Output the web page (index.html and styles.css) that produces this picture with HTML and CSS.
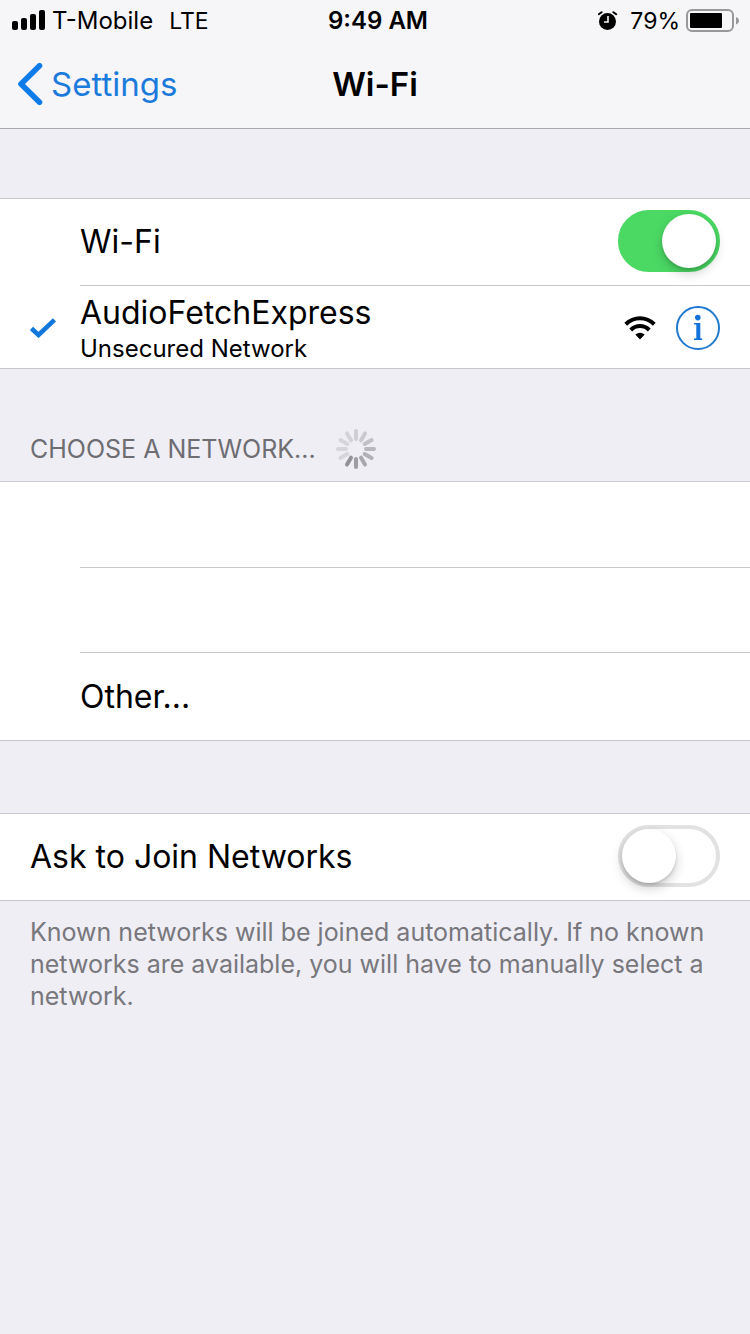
FILE: index.html
```html
<!DOCTYPE html>
<html lang="en">
<head>
<meta charset="utf-8">
<meta name="viewport" content="width=device-width, initial-scale=1">
<title>Wi-Fi</title>
<link rel="stylesheet" href="styles.css">
</head>
<body>
<header class="top">
  <div class="status">
    <div class="status-left">
      <svg width="34" height="22" viewBox="0 0 34 22" aria-hidden="true">
        <rect x="0" y="11" width="6" height="9" rx="2"/>
        <rect x="9" y="8" width="6" height="12" rx="2"/>
        <rect x="18" y="4" width="6" height="16" rx="2"/>
        <rect x="27" y="0" width="6" height="20" rx="2"/>
      </svg>
      <span>T-Mobile</span>
      <span class="bearer">LTE</span>
    </div>
    <div class="time">9:49 AM</div>
    <div class="status-right">
      <svg width="20" height="20" viewBox="0 0 20 20" aria-hidden="true">
        <circle cx="9.500" cy="10.500" r="8.500"/>
        <path d="M.8 3.200 3.600 1.200M18.200 3.200 15.400 1.200" stroke="#000" stroke-width="2" stroke-linecap="round"/>
        <path d="M10 5v6H6" fill="none" stroke="#f6f6f8" stroke-width="1.600"/>
      </svg>
      <span class="percent">79%</span>
      <svg width="54" height="24" viewBox="0 0 54 24" aria-hidden="true">
        <rect x="1" y="1" width="46" height="21" rx="5" fill="none" stroke="#98989b" stroke-width="2"/>
        <rect x="4" y="4" width="32" height="15" rx="1"/>
        <path d="M50 8c4 1.500 4 6 0 7.500z" fill="#98989b"/>
      </svg>
    </div>
  </div>
  <nav class="nav">
    <a class="back" href="#">
      <svg width="26" height="42" viewBox="0 0 26 42" aria-hidden="true">
        <path d="M22.500 2.800 4 21l18.500 18.200" fill="none" stroke="#0d7be8" stroke-width="5.600" stroke-linecap="round" stroke-linejoin="round"/>
      </svg>
      <span>Settings</span>
    </a>
    <h1 class="title">Wi-Fi</h1>
  </nav>
</header>
<main>
  <section class="group first">
    <div class="row indented">
      <label class="label" for="wifi">Wi-Fi</label>
      <input class="switch" id="wifi" type="checkbox" role="switch" checked>
    </div>
    <div class="row network">
      <svg class="check" width="26" height="20" viewBox="0 0 26 20" aria-hidden="true">
        <path d="M1.500 10.500 8.500 17 24.500 1.800" fill="none" stroke="#1277dc" stroke-width="4.600"/>
      </svg>
      <div class="names">
        <span class="ssid">AudioFetchExpress</span>
        <span class="detail">Unsecured Network</span>
      </div>
      <svg width="32" height="24" viewBox="0 0 32 24" aria-hidden="true">
        <path d="M1.700 8.200C10 .2 22 .2 30.300 8.200" fill="none" stroke="#000" stroke-width="4"/>
        <path d="M6.700 14C12 8.700 20 8.700 25.300 14" fill="none" stroke="#000" stroke-width="4"/>
        <path d="M16 23.500 11.300 18.500Q16 14.800 20.700 18.500Z"/>
      </svg>
      <button class="info" type="button" aria-label="Network details">
        <svg width="44" height="44" viewBox="0 0 44 44" aria-hidden="true">
          <circle cx="22" cy="22" r="21" fill="none" stroke="#2079cf" stroke-width="2"/>
          <g fill="#1473db">
            <circle cx="21.800" cy="11.600" r="2.800"/>
            <path d="M18 17h6.300v15.200l1.900.4V34H18v-1.400l2.300-.4V18.700L18 18.300z"/>
          </g>
        </svg>
      </button>
    </div>
  </section>

  <h2 class="heading">
    <span>CHOOSE A NETWORK...</span>
    <svg width="40" height="40" viewBox="-20 -20 40 40" stroke-width="4" stroke-linecap="round" aria-hidden="true">
      <path d="M0-10v-8" stroke="#cfcfd3"/>
      <path d="M0-10v-8" stroke="#cacace" transform="rotate(30)"/>
      <path d="M0-10v-8" stroke="#c1c1c5" transform="rotate(60)"/>
      <path d="M0-10v-8" stroke="#b9b9bd" transform="rotate(90)"/>
      <path d="M0-10v-8" stroke="#b1b1b5" transform="rotate(120)"/>
      <path d="M0-10v-8" stroke="#a8a8ac" transform="rotate(150)"/>
      <path d="M0-10v-8" stroke="#9e9ea2" transform="rotate(180)"/>
      <path d="M0-10v-8" stroke="#939397" transform="rotate(210)"/>
      <path d="M0-10v-8" stroke="#d6d6da" transform="rotate(240)"/>
      <path d="M0-10v-8" stroke="#d6d6da" transform="rotate(270)"/>
      <path d="M0-10v-8" stroke="#d5d5d9" transform="rotate(300)"/>
      <path d="M0-10v-8" stroke="#d3d3d7" transform="rotate(330)"/>
    </svg>
  </h2>
  <section class="group">
    <div class="row blank"></div>
    <div class="row blank"></div>
    <button class="row indented other" type="button">Other...</button>
  </section>

  <section class="group ask">
    <div class="row">
      <label class="label" for="ask">Ask to Join Networks</label>
      <input class="switch" id="ask" type="checkbox" role="switch">
    </div>
  </section>
  <p class="note">Known networks will be joined automatically. If no known networks are available, you will have to manually select a network.</p>
</main>
</body>
</html>
```
FILE: styles.css
```css
* {
  box-sizing: border-box;
}

body {
  margin: 0;
  min-height: 100vh;
  background: #efeef4;
  color: #000;
  font-family: Inter, "Liberation Sans", sans-serif;
  font-size: 32px;
  line-height: 40px;
}

svg {
  display: block;
  flex: none;
}

.top {
  background: #f6f6f8;
  border-bottom: 1px solid #a9a9ae;
}

.status,
.nav {
  display: grid;
  grid-template-columns: 1fr auto 1fr;
  align-items: center;
}

.status {
  height: 40px;
  padding: 2px 10px 0 12px;
  font-size: 24px;
  line-height: 30px;
}

.status-left,
.status-right {
  display: flex;
  align-items: center;
  gap: 6px;
}

.status-right {
  justify-content: flex-end;
}

.bearer {
  margin-left: 10px;
  font-size: 23px;
}

.percent {
  padding-left: 6px;
  font-size: 23px;
}

.time {
  padding-left: 4px;
  font-weight: 600;
}

.nav {
  height: 88px;
  padding: 0 17px;
  font-size: 33px;
}

.back {
  display: flex;
  align-items: center;
  gap: 8px;
  color: #1b7bdc;
  text-decoration: none;
}

.title {
  grid-column: 2;
  margin: 0;
  font-size: 33px;
  font-weight: 600;
}

.group {
  background: #fff;
  border: solid #c8c7cc;
  border-width: 1px 0;
}

.first {
  margin-top: 69px;
}

.row {
  position: relative;
  display: flex;
  align-items: center;
  width: 100%;
  min-height: 86px;
  padding: 0 30px 2px;
  border: 0;
  background: none;
  color: inherit;
  font: inherit;
  text-align: left;
}

.indented {
  padding-left: 80px;
}

.row + .row::before {
  content: "";
  position: absolute;
  top: 0;
  left: 80px;
  right: 0;
  height: 1px;
  background: #c8c7cc;
}

.blank {
  min-height: 85px;
}

.other {
  min-height: 88px;
  padding-top: 2px;
  padding-bottom: 0;
}

.label {
  flex: 1;
  padding-top: 2px;
}

.network {
  min-height: 83px;
  padding: 2px 30px 0;
  gap: 20px;
}

.check {
  margin-right: 4px;
}

.names {
  flex: 1;
  display: flex;
  flex-direction: column;
}

.ssid {
  line-height: 42px;
}

.detail {
  font-size: 24px;
  line-height: 30px;
}

.info {
  padding: 0;
  border: 0;
  border-radius: 50%;
  background: none;
}

.switch {
  appearance: none;
  flex: none;
  width: 102px;
  height: 62px;
  margin: 0;
  padding: 0;
  border: 4px solid #e2e2e3;
  border-radius: 31px;
  background: #fff;
}

.switch::before {
  content: "";
  display: block;
  width: 54px;
  height: 54px;
  border-radius: 50%;
  background: #fff;
  box-shadow: 0 5px 12px rgba(0, 0, 0, 0.2), 0 2px 3px rgba(0, 0, 0, 0.12);
}

.switch:checked {
  border-color: #4bd964;
  background: #4bd964;
}

.switch:checked::before {
  margin-left: auto;
}

.heading {
  display: flex;
  align-items: center;
  gap: 20px;
  margin: 0;
  padding: 60px 30px 12px;
  color: #6d6d72;
  font-size: 25px;
  font-weight: 400;
}

.ask {
  margin-top: 72px;
}

.note {
  margin: 0;
  padding: 15px 30px;
  color: #77777c;
  font-size: 25px;
  line-height: 32px;
}
```
